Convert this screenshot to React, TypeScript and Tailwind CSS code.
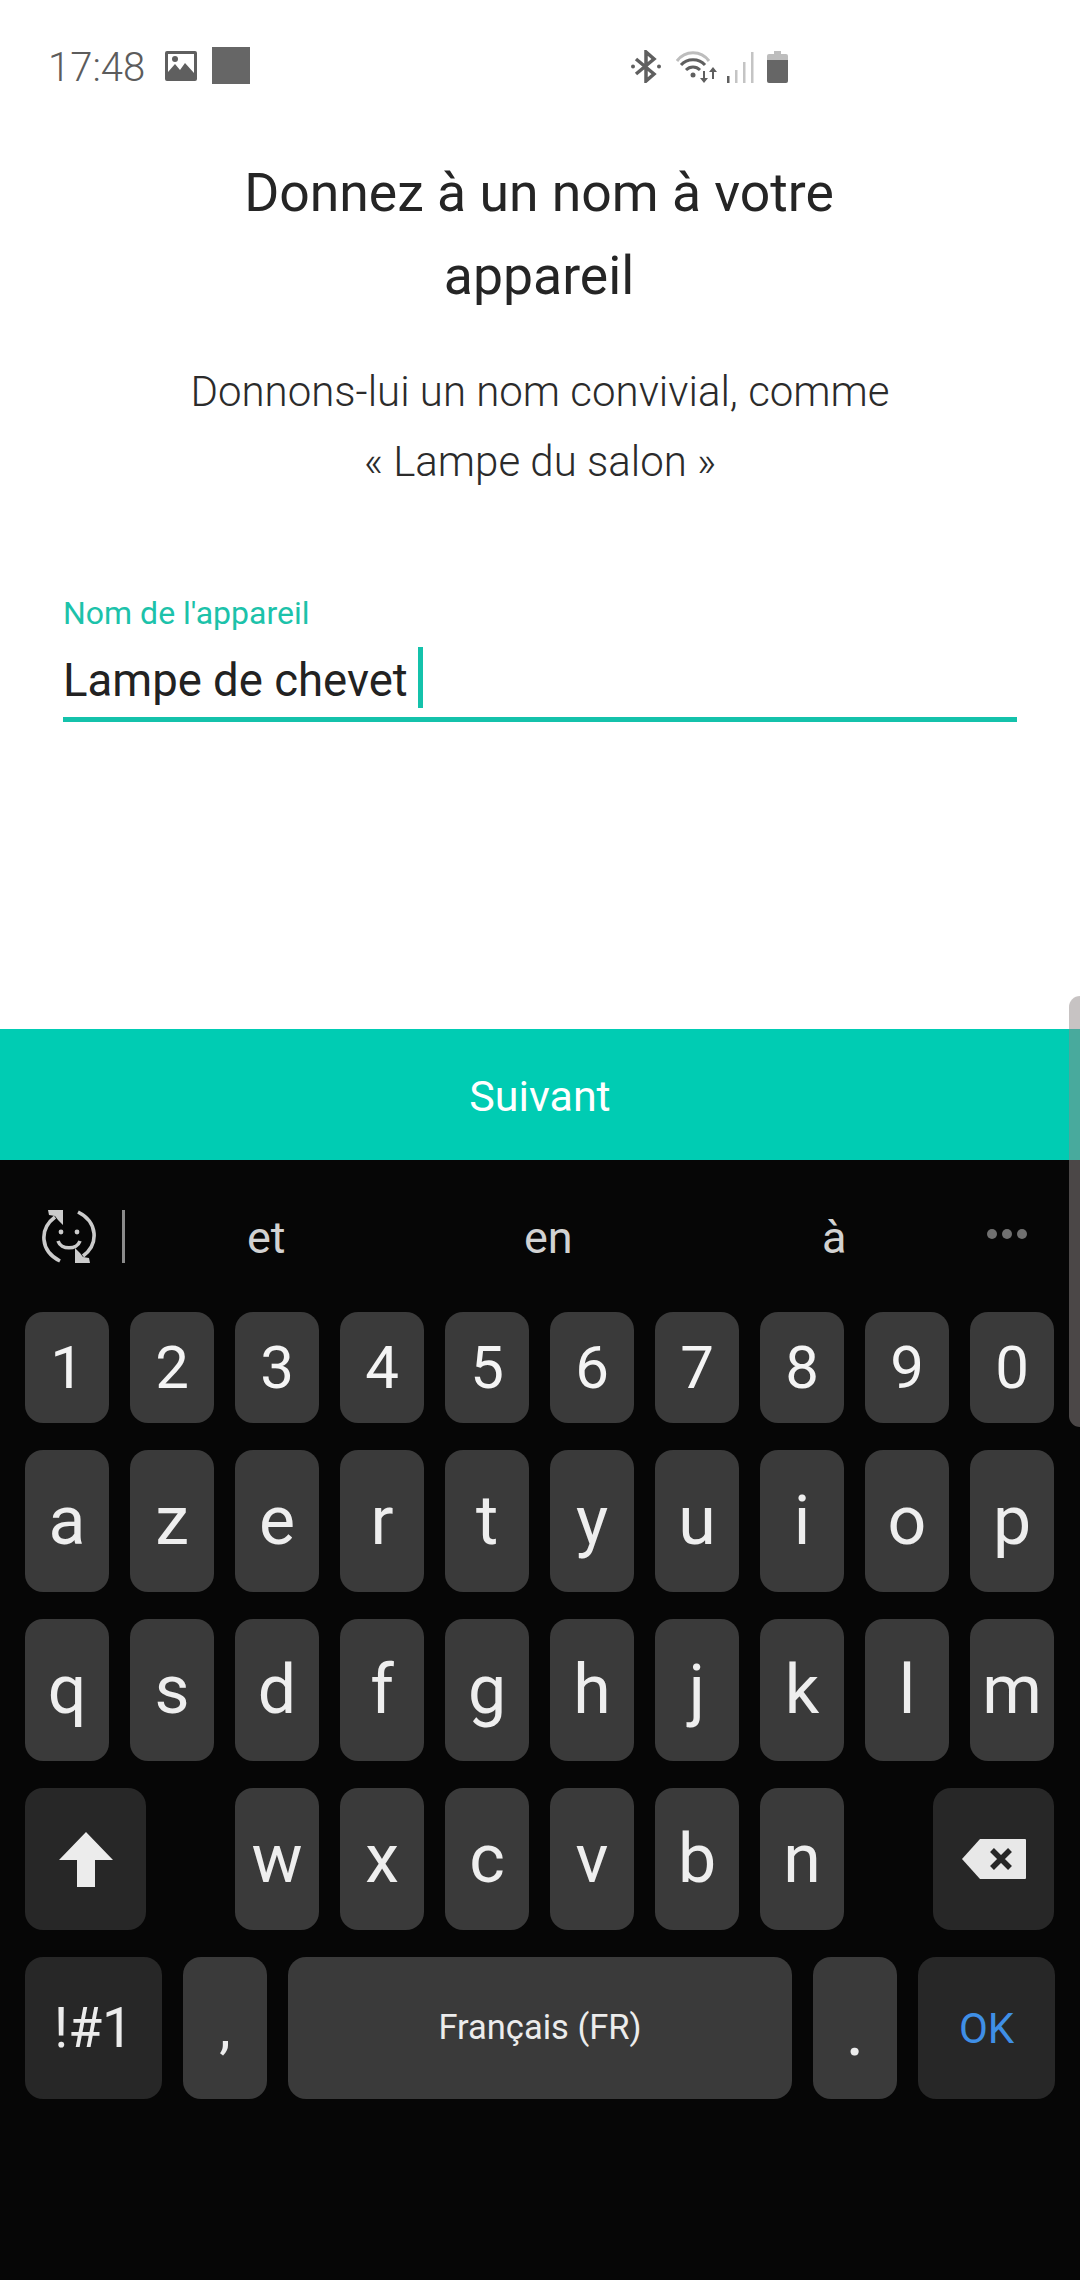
import React from "react";

const Key = ({ children, className = "" }: { children: React.ReactNode; className?: string }) => (
  <div className={`flex items-center justify-center rounded-[18px] ${className}`}>{children}</div>
);

const L = ({ c, digit = false }: { c: string; digit?: boolean }) =>
  digit ? (
    <Key className="h-[111px] w-[84px] bg-[#3a3a3a] text-[60px] leading-none text-[#f4f4f4]">{c}</Key>
  ) : (
    <Key className="h-[142px] w-[84px] bg-[#3a3a3a] text-[68px] leading-none text-[#eeeeee]">{c}</Key>
  );

const Row = ({ keys }: { keys: string }) => (
  <div className="mt-[27px] flex gap-[21px]">
    {keys.split("").map((k) => (
      <L key={k} c={k} />
    ))}
  </div>
);

export default function App() {
  return (
    <div className="relative flex h-[2280px] w-[1080px] flex-col overflow-hidden bg-white font-['Roboto',sans-serif]">
      {/* status bar */}
      <div className="flex h-[151px] shrink-0 items-start pl-[48px] pt-[47px]">
        <span className="text-[40px] font-light leading-[42px] text-[#5c5c5c]">17:48</span>
        <svg className="ml-[20px] mt-[4px]" width="32" height="30" viewBox="0 0 32 30">
          <path fill="#5f5f5f" fillRule="evenodd" d="M2 0h28a2 2 0 0 1 2 2v26a2 2 0 0 1-2 2H2a2 2 0 0 1-2-2V2a2 2 0 0 1 2-2zm1 3v18l7-8 5 6 5-7 9 10V3z" />
          <circle cx="10" cy="8" r="3" fill="#5f5f5f" />
        </svg>
        <div className="ml-[15px] h-[37px] w-[38px] bg-[#666666]" />
        <svg className="ml-[381px] mt-[3px]" width="30" height="33" viewBox="0 0 30 33">
          <path fill="none" stroke="#5f5f5f" strokeWidth="3.5" d="M5 9l18 15-8 7V2l8 7L5 24" />
          <circle cx="2" cy="16.5" r="2" fill="#5f5f5f" />
          <circle cx="28" cy="16.5" r="2" fill="#5f5f5f" />
        </svg>
        <svg className="ml-[15px] mt-[3px]" width="44" height="33" viewBox="0 0 44 33">
          <path fill="none" stroke="#bdbdbd" strokeWidth="3" d="M1 11C9 0 25 0 33 11" />
          <path fill="none" stroke="#5f5f5f" strokeWidth="3" d="M5 15c6-7 18-7 24 0M10 20c4-4 10-4 14 0" />
          <circle cx="17" cy="25" r="2.5" fill="#5f5f5f" />
          <path fill="#5f5f5f" d="M27 21h2v7h3l-4 5-4-5h3zM37 17l4 5h-3v7h-2v-7h-3z" />
        </svg>
        <svg className="ml-[7px] mt-[3px]" width="28" height="33" viewBox="0 0 28 33">
          <rect x="0" y="26" width="2.5" height="7" fill="#5f5f5f" />
          <rect x="8" y="20" width="2.5" height="13" fill="#c4c4c4" />
          <rect x="16" y="12" width="2.5" height="21" fill="#c4c4c4" />
          <rect x="24" y="2" width="2.5" height="31" fill="#c4c4c4" />
        </svg>
        <svg className="ml-[12px] mt-[4px]" width="21" height="32" viewBox="0 0 21 32">
          <path fill="#bdbdbd" d="M7 0h7v3h5a2 2 0 0 1 2 2v6H0V5a2 2 0 0 1 2-2h5z" />
          <path fill="#666666" d="M0 9h21v21a2 2 0 0 1-2 2H2a2 2 0 0 1-2-2z" />
        </svg>
      </div>

      {/* title */}
      <h1 className="shrink-0 pr-[2px] text-center text-[53.5px] font-normal leading-[83px] text-[#252525]">
        Donnez à un nom à votre
        <br />
        appareil
      </h1>
      <p className="mt-[40px] shrink-0 text-center text-[42px] font-light leading-[70px] text-[#2b2b2b]">
        Donnons-lui un nom convivial, comme
        <br />« Lampe du salon »
      </p>

      {/* field */}
      <div className="mx-[63px] mt-[96px] shrink-0">
        <div className="text-[32px] leading-[40px] text-[#1cc2aa]">Nom de l'appareil</div>
        <div className="flex h-[89px] items-end border-b-[5px] border-[#14c2ab]">
          <span className="mb-[6px] text-[45.5px] leading-[60px] text-[#222222]">Lampe de chevet</span>
          <span className="mb-[9px] ml-[10px] h-[61px] w-[5px] bg-[#14c2ab]" />
        </div>
      </div>

      <div className="flex-1" />

      {/* next */}
      <div className="flex h-[131px] shrink-0 items-center justify-center bg-[#00ccb3] pt-[4px] text-[43px] text-white">Suivant</div>

      {/* keyboard */}
      <div className="h-[1120px] shrink-0 bg-[#060606] px-[25px]">
        <div className="flex h-[152px] items-center">
          <svg className="ml-[17px]" width="54" height="55" viewBox="0 0 54 55">
            <g fill="none" stroke="#cbcbcb" strokeWidth="3.6">
              <path d="M18 52C-2 42-3 20 13 8" />
              <path d="M36 3c20 10 21 32 5 44" />
              <path d="M16 32c3 9 19 9 22 0" />
            </g>
            <path fill="#cbcbcb" d="M6 1h15v15l-5-5-3-4-6-1zM48 54H33V39l5 5 3 4 6 1z" />
            <circle cx="19" cy="23" r="2.4" fill="#cbcbcb" />
            <circle cx="35" cy="23" r="2.4" fill="#cbcbcb" />
          </svg>
          <div className="ml-[26px] h-[53px] w-[3px] bg-[#8a8a8a]" />
          <div className="relative h-full flex-1 text-[45px] text-[#d2d2d2]">
            <span className="absolute left-[122px] top-[53px] leading-[50px]">et</span>
            <span className="absolute left-[399px] top-[53px] leading-[50px]">en</span>
            <span className="absolute left-[697px] top-[53px] leading-[50px]">à</span>
            <div className="absolute left-[862px] top-[69px] flex gap-[5px]">
              <span className="h-[10px] w-[10px] rounded-full bg-[#707070]" />
              <span className="h-[10px] w-[10px] rounded-full bg-[#707070]" />
              <span className="h-[10px] w-[10px] rounded-full bg-[#707070]" />
            </div>
          </div>
        </div>

        <div className="flex gap-[21px]">
          {"1234567890".split("").map((k) => (
            <L key={k} c={k} digit />
          ))}
        </div>
        <Row keys="azertyuiop" />
        <Row keys="qsdfghjklm" />

        <div className="mt-[27px] flex">
          <Key className="h-[142px] w-[121px] bg-[#272727]">
            <svg width="54" height="55" viewBox="0 0 54 55">
              <path fill="#ececec" d="M27 0l27 28H36v27H18V28H0z" />
            </svg>
          </Key>
          <div className="ml-[89px] flex gap-[21px]">
            {"wxcvbn".split("").map((k) => (
              <L key={k} c={k} />
            ))}
          </div>
          <Key className="ml-[89px] h-[142px] w-[121px] bg-[#272727]">
            <svg width="64" height="40" viewBox="0 0 64 40">
              <path fill="#e8e8e8" d="M18 0h45a1 1 0 0 1 1 1v38a1 1 0 0 1-1 1H18L0 20z" />
              <path fill="none" stroke="#272727" strokeWidth="5.5" d="M30 11l18 18M48 11L30 29" />
            </svg>
          </Key>
        </div>

        <div className="mt-[27px] flex gap-[21px]">
          <Key className="h-[142px] w-[137px] bg-[#272727] text-[55px] text-[#ececec]">!#1</Key>
          <Key className="h-[142px] w-[84px] items-end bg-[#3a3a3a] pb-[43px] text-[58px] leading-none text-[#ececec]">,</Key>
          <Key className="h-[142px] w-[504px] bg-[#3a3a3a] text-[34.5px] text-[#ececec]">Français (FR)</Key>
          <Key className="h-[142px] w-[84px] items-end bg-[#3a3a3a] pb-[32px] text-[72px] leading-none text-[#ececec]">.</Key>
          <Key className="h-[142px] w-[137px] bg-[#272727] text-[42px] text-[#3f8fe6]">OK</Key>
        </div>
      </div>

      {/* edge handle overlay */}
      <div className="absolute left-[1069px] top-[996px] h-[431px] w-[11px] rounded-l-[12px] bg-[#8f8787]/50" />
    </div>
  );
}
